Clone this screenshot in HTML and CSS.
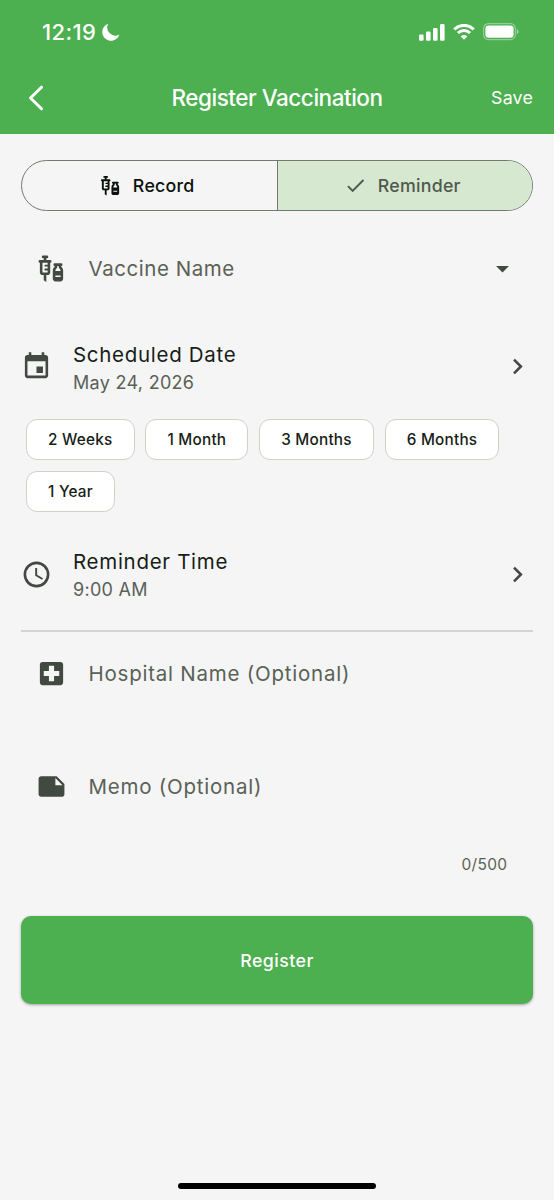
FILE: index.html
```
<!DOCTYPE html>
<html lang="en">
<head>
<meta charset="utf-8">
<title>Register Vaccination</title>
<link rel="stylesheet" href="styles.css">
</head>
<body>
<svg width="0" height="0" class="defs">
  <symbol id="vaccines" viewBox="0 0 24 24"><path fill-rule="evenodd" d="M11 5.500H8V4h.5a1 1 0 0 0 0-2h-3a1 1 0 0 0 0 2H6v1.500H3a1 1 0 0 0 0 2V15c0 1.100.9 2 2 2h1v4l2 1.500V17h1c1.100 0 2-.9 2-2V7.500a1 1 0 0 0 0-2zM9 9H7.250a.75.75 0 0 0 0 1.500H9V12H7.250a.75.75 0 0 0 0 1.500H9V15H5V7.500h4zM19.500 10.500V10a1 1 0 0 0 0-2h-5a1 1 0 0 0 0 2v.5c0 .5-1.500 1.160-1.500 3V20c0 1.100.9 2 2 2h4c1.100 0 2-.9 2-2v-6.500c0-1.840-1.500-2.500-1.500-3zM16.500 10.500V10h1v.5c0 1.600 1.500 2 1.500 3V14h-4v-.5c0-1 1.500-1.400 1.500-3zM15 18.600V17.400h4v1.200z"/></symbol>
  <symbol id="chevron" viewBox="0 0 24 24"><path d="M10 6 8.590 7.410 13.170 12l-4.580 4.590L10 18l6-6z"/></symbol>
</svg>
<header class="header">
  <div class="status">
    <span class="clock">12:19</span>
    <svg class="moon" viewBox="0 0 18 18"><path d="M6.200.8A8.700 8.700 0 1 0 17.300 11.400 8 8 0 0 1 6.200.8z"/></svg>
    <svg class="signal" viewBox="0 0 26 17"><rect x="0" y="10.500" width="4.600" height="6.200" rx="1.300"/><rect x="7" y="7.500" width="4.600" height="9.200" rx="1.300"/><rect x="14" y="4" width="4.600" height="12.700" rx="1.300"/><rect x="21" y="0" width="4.600" height="16.700" rx="1.300"/></svg>
    <svg class="wifi" viewBox="0 0 22 16"><path d="M1.300 5.300a14 14 0 0 1 19.400 0M4.900 9a9 9 0 0 1 12.200 0" fill="none" stroke="#fff" stroke-width="3"/><path d="M11 15.800 7.600 12.400a4.900 4.900 0 0 1 6.800 0z"/></svg>
    <svg class="battery" viewBox="0 0 36 18"><rect x=".6" y=".6" width="31.800" height="16" rx="4.800" fill="none" stroke="#fff" stroke-opacity=".4" stroke-width="1.200"/><rect x="2.400" y="2.400" width="28.200" height="12.400" rx="3.200"/><path d="M33.800 6v5.200c2.200-1 2.200-4.200 0-5.200z" opacity=".5"/></svg>
  </div>
  <div class="appbar">
    <svg class="back" viewBox="0 0 16 26"><path d="M13.500 2.200 2.500 13l11 10.800"/></svg>
    <h1 class="title">Register Vaccination</h1>
    <span class="save">Save</span>
  </div>
</header>
<main class="main">
  <div class="segments">
    <div class="segment"><svg class="icon-s"><use href="#vaccines"/></svg><span class="seg-label">Record</span></div>
    <div class="segment selected"><svg class="icon-s" viewBox="0 0 24 24"><path d="M9 16.170 4.830 12l-1.420 1.410L9 19 21 7l-1.410-1.410z"/></svg><span class="seg-label">Reminder</span></div>
  </div>
  <div class="field vaccine">
    <svg class="icon"><use href="#vaccines"/></svg><span class="field-label">Vaccine Name</span>
    <svg class="icon end" viewBox="0 0 24 24"><path d="m7 10 5 5 5-5z"/></svg>
  </div>
  <div class="tile">
    <svg class="icon" viewBox="0 0 24 24"><path d="M17 12h-5v5h5v-5zM16 1v2H8V1H6v2H5c-1.110 0-1.990.9-1.990 2L3 19c0 1.100.89 2 2 2h14c1.100 0 2-.9 2-2V5c0-1.100-.9-2-2-2h-1V1h-2zm3 18H5V8h14v11z"/></svg>
    <div class="tile-text"><span class="tile-title">Scheduled Date</span><span class="tile-sub">May 24, 2026</span></div>
    <svg class="icon end"><use href="#chevron"/></svg>
  </div>
  <div class="chips">
    <span class="chip">2 Weeks</span><span class="chip">1 Month</span><span class="chip">3 Months</span><span class="chip">6 Months</span><span class="chip">1 Year</span>
  </div>
  <div class="tile time">
    <svg class="icon" viewBox="0 0 24 24"><path d="M12 2a10 10 0 1 0 0 20 10 10 0 0 0 0-20zm0 18a8 8 0 1 1 0-16 8 8 0 0 1 0 16zm.5-13H11v6l5.250 3.150.75-1.230-4.500-2.670z"/></svg>
    <div class="tile-text"><span class="tile-title">Reminder Time</span><span class="tile-sub">9:00 AM</span></div>
    <svg class="icon end"><use href="#chevron"/></svg>
  </div>
  <div class="divider"></div>
  <div class="field hospital">
    <svg class="icon" viewBox="0 0 24 24"><path d="M19 3H5c-1.100 0-1.990.9-1.990 2L3 19c0 1.100.9 2 2 2h14c1.100 0 2-.9 2-2V5c0-1.100-.9-2-2-2zm-1 11h-4v4h-4v-4H6v-4h4V6h4v4h4v4z"/></svg><span class="field-label">Hospital Name (Optional)</span>
  </div>
  <div class="field memo">
    <svg class="icon" viewBox="0 0 24 24"><path d="m22 10-6-6H4c-1.100 0-2 .9-2 2v12.010c0 1.100.9 1.990 2 1.990l16-.01c1.100 0 2-.89 2-2v-8zm-7-4.500 5.500 5.500H15V5.500z"/></svg><span class="field-label">Memo (Optional)</span>
  </div>
  <div class="counter">0/500</div>
  <div class="register"><span>Register</span></div>
</main>
<div class="home"></div>
</body>
</html>
```
FILE: styles.css
```
* { box-sizing: border-box; }
body {
  margin: 0;
  width: 554px;
  height: 1200px;
  overflow: hidden;
  display: flex;
  flex-direction: column;
  background: #f5f5f5;
  color: #171d17;
  font-family: Inter, "Liberation Sans", sans-serif;
  white-space: nowrap;
}
svg { display: block; flex: none; fill: currentColor; }
.defs { display: none; }
.header { height: 133.500px; flex: none; background: #4caf50; color: #fff; }
.status { display: flex; align-items: center; height: 64px; padding: 0 35px 0 42px; }
.clock { width: 55px; font-size: 22px; font-weight: 500; letter-spacing: .4px; }
.moon { width: 18px; height: 18px; margin-left: 5px; }
.signal { width: 26px; height: 17px; margin-left: auto; }
.wifi { width: 22px; height: 16px; margin-left: 8px; }
.battery { width: 36px; height: 18px; margin-left: 8px; }
.appbar { display: grid; grid-template-columns: 1fr auto 1fr; align-items: center; height: 67px; padding: 0 21px 0 28px; }
.back { width: 16px; height: 26px; fill: none; stroke: #fff; stroke-width: 3; stroke-linecap: round; stroke-linejoin: round; }
.title { margin: 0 7px 0 0; font-size: 22.500px; font-weight: 500; letter-spacing: -.47px; }
.save { justify-self: end; font-size: 17.800px; letter-spacing: .2px; }
.main { display: flex; flex-direction: column; padding: 26px 21px 0; }
.segments { display: flex; height: 51.500px; border: 1.300px solid #72796f; border-radius: 26px; overflow: hidden; color: #0c120c; }
.segment { width: 50%; display: flex; align-items: center; justify-content: center; gap: 10.500px; padding-right: 5px; }
.selected { background: #d6e8d0; border-left: 1px solid #72796f; color: #50594e; }
.icon-s { width: 23px; height: 23px; }
.seg-label { font-size: 17.800px; font-weight: 500; letter-spacing: .25px; }
.field { display: flex; align-items: center; padding: 0 15.500px 0 15px; color: #424940; }
.icon { width: 31px; height: 31px; color: #424940; }
.end { margin-left: auto; }
.field-label { margin-left: 21.500px; font-size: 20.500px; letter-spacing: .77px; color: #5a6157; }
.vaccine { height: 115px; }
.vaccine .field-label { letter-spacing: .55px; }
.tile { display: flex; align-items: center; height: 81px; }
.tile-text { display: flex; flex-direction: column; margin-left: 21px; gap: 2px; padding-top: 4px; }
.tile-title { font-size: 20.500px; line-height: 26px; letter-spacing: .7px; }
.tile-sub { font-size: 18px; line-height: 26px; letter-spacing: .3px; color: #5a6157; }
.chips { display: flex; flex-wrap: wrap; gap: 11px 10.800px; padding: 12px 5px 0; }
.chip { height: 41px; padding: 0 21.100px; border: 1.300px solid #cfd2c9; border-radius: 11px; background: #fff; font-size: 15.300px; font-weight: 500; line-height: 39px; letter-spacing: .22px; }
.time { margin-top: 21.500px; }
.divider { height: 2px; margin-top: 15px; background: #d3d5cc; }
.hospital { height: 83px; margin-bottom: 3.500px; }
.memo { height: 137px; }
.counter { align-self: flex-end; margin-right: 25.500px; font-size: 15.500px; line-height: 20px; letter-spacing: .35px; color: #5a6157; }
.register { display: flex; align-items: center; justify-content: center; height: 88px; margin-top: 41px; border-radius: 10px; background: #4caf50; color: #fff; font-size: 17.800px; font-weight: 500; letter-spacing: .45px; box-shadow: 0 1px 3px rgba(0, 0, 0, .35); }
.home { width: 198px; height: 6px; margin: auto auto 11px; border-radius: 3px; background: #000; }
```
